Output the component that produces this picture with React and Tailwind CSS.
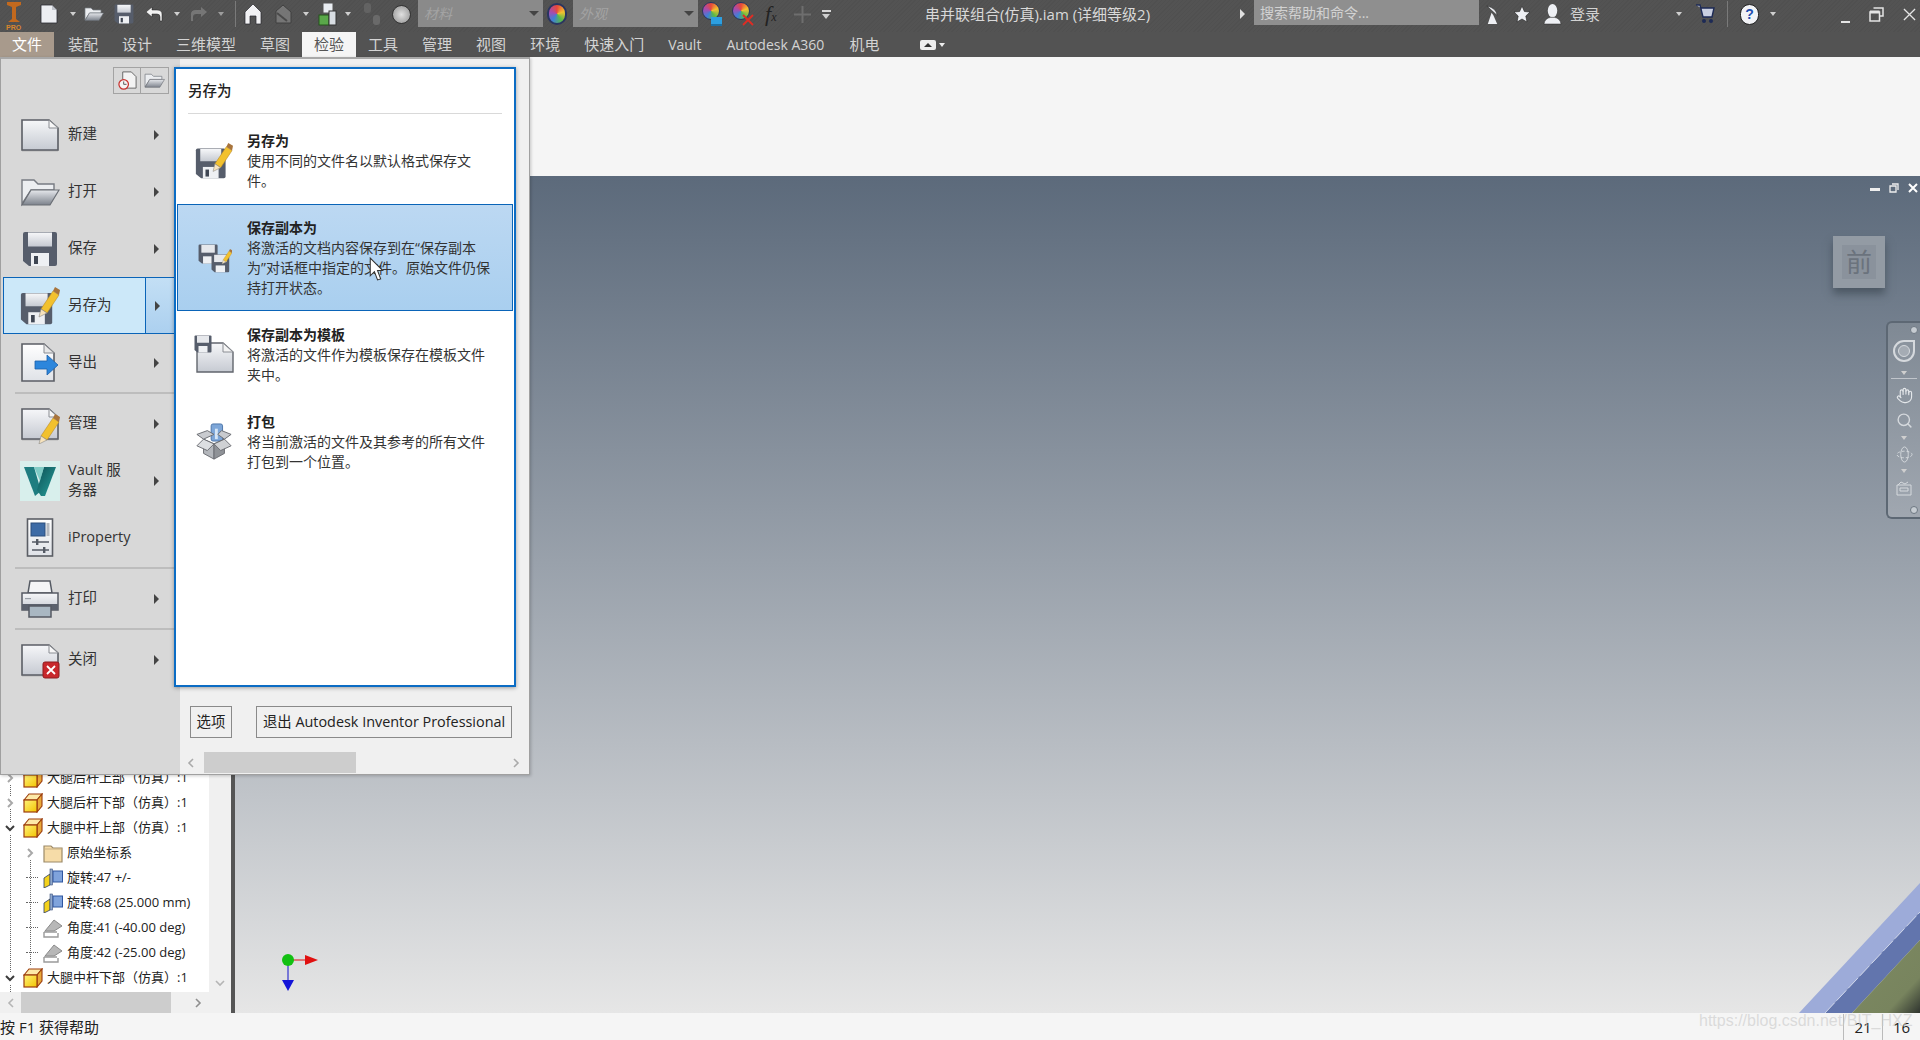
import React from "react";
import { Hand, Search } from "lucide-react";

const Defs = () => (
  <svg className="absolute w-0 h-0">
    <defs>
      <linearGradient id="paper" x1="0" y1="0" x2="0" y2="1">
        <stop offset="0" stopColor="#f6f7f9" />
        <stop offset="1" stopColor="#c6cad2" />
      </linearGradient>
      <linearGradient id="paper2" x1="0" y1="0" x2="0" y2="1">
        <stop offset="0" stopColor="#ffffff" />
        <stop offset="1" stopColor="#dfe2e7" />
      </linearGradient>
      <linearGradient id="folder" x1="0" y1="0" x2="0" y2="1">
        <stop offset="0" stopColor="#e6e8ec" />
        <stop offset="1" stopColor="#7c828c" />
      </linearGradient>
      <linearGradient id="cubeYellow" x1="0" y1="0" x2="1" y2="1">
        <stop offset="0" stopColor="#fff27a" />
        <stop offset="1" stopColor="#f2c400" />
      </linearGradient>
      <linearGradient id="teal" x1="0" y1="0" x2="1" y2="1">
        <stop offset="0" stopColor="#0d4f55" />
        <stop offset="1" stopColor="#27a39d" />
      </linearGradient>
      <linearGradient id="partGreen" x1="0" y1="0" x2="1" y2="1">
        <stop offset="0" stopColor="#7d8a62" />
        <stop offset="0.75" stopColor="#78845e" />
        <stop offset="1" stopColor="#2f342f" />
      </linearGradient>
    </defs>
  </svg>
);

const Pencil = () => (
  <g>
    <polygon points="20,24 32,6 38,10 26,28" fill="#f2c12e" stroke="#b8892a" strokeWidth="0.6" />
    <polygon points="20,24 26,28 18,32" fill="#f7e3bd" stroke="#888" strokeWidth="0.6" />
    <polygon points="32,6 34,2 39,5 38,10" fill="#a8743c" />
  </g>
);

const Doc = ({ children, className }) => (
  <svg viewBox="0 0 40 40" className={className}>
    <path d="M2 6 H29 L38 14 V35 H2 Z" fill="#9a9a9a" opacity="0.5" transform="translate(0 1.5)" />
    <path d="M2 5 H29 L38 13 V35 H2 Z" fill="url(#paper)" stroke="#5b5e65" strokeWidth="1.6" />
    <path d="M29 5 V13 H38 Z" fill="#f7f7f7" stroke="#8a8d93" strokeWidth="1" />
    {children}
  </svg>
);

const TallDoc = ({ children, className }) => (
  <svg viewBox="0 0 40 40" className={className}>
    <path d="M2 1 H24 L34 10 V38 H2 Z" fill="url(#paper2)" stroke="#5b5e65" strokeWidth="1.6" />
    <path d="M24 1 V10 H34 Z" fill="#e8e8e8" stroke="#8a8d93" strokeWidth="1" />
    {children}
  </svg>
);

const FolderOpen = ({ className }) => (
  <svg viewBox="0 0 40 30" className={className}>
    <path d="M2 27 V3 H14 L18 7 H34 V13 H11 Z" fill="#eceef1" stroke="#777b82" strokeWidth="1.4" />
    <path d="M2 28 L11 13 H39 L30 28 Z" fill="url(#folder)" stroke="#6a6e75" strokeWidth="1.2" />
  </svg>
);

const Floppy = ({ className, children, vb = "0 0 36 36" }) => (
  <svg viewBox={vb} className={className}>
    <path d="M1 3 Q1 1 3 1 H33 Q35 1 35 3 V33 Q35 35 33 35 H7 L1 30 Z" fill="#565d6b" />
    <rect x="6" y="1.5" width="24" height="14" fill="url(#paper)" />
    <rect x="9" y="22" width="18" height="13" fill="#eef0f3" />
    <rect x="12" y="25" width="4" height="8" fill="#3f4653" />
    {children}
  </svg>
);

const SaveAs = ({ className }) => (
  <svg viewBox="0 0 40 40" className={className}>
    <g transform="translate(0 6) scale(0.92)">
      <path d="M1 3 Q1 1 3 1 H33 Q35 1 35 3 V33 Q35 35 33 35 H7 L1 30 Z" fill="#565d6b" />
      <rect x="6" y="1.5" width="24" height="14" fill="url(#paper)" />
      <rect x="9" y="22" width="18" height="13" fill="#eef0f3" />
      <rect x="12" y="25" width="4" height="8" fill="#3f4653" />
    </g>
    <g transform="translate(1 -1)">
      <Pencil />
    </g>
  </svg>
);

const SaveCopy = ({ className }) => (
  <svg viewBox="0 0 36 36" className={className}>
    <g transform="translate(2 4) scale(0.56)">
      <path d="M1 3 Q1 1 3 1 H33 Q35 1 35 3 V33 Q35 35 33 35 H7 L1 30 Z" fill="#565d6b" />
      <rect x="6" y="1.5" width="24" height="14" fill="#e6e8ec" />
      <rect x="9" y="22" width="18" height="13" fill="#eef0f3" />
    </g>
    <g transform="translate(15 14) scale(0.52)">
      <path d="M1 3 Q1 1 3 1 H33 Q35 1 35 3 V33 Q35 35 33 35 H7 L1 30 Z" fill="#565d6b" />
      <rect x="6" y="1.5" width="24" height="14" fill="#e6e8ec" />
      <rect x="9" y="22" width="18" height="13" fill="#eef0f3" />
    </g>
    <g transform="translate(17 8) scale(0.5)">
      <Pencil />
    </g>
  </svg>
);

const SaveTemplate = ({ className }) => (
  <svg viewBox="0 0 40 40" className={className}>
    <path d="M3 8 H29 L39 17 V37 H3 Z" fill="url(#paper)" stroke="#62666d" strokeWidth="1.4" />
    <path d="M29 8 V17 H39 Z" fill="#f3f3f3" stroke="#8a8d93" strokeWidth="1" />
    <g transform="scale(0.5)">
      <path d="M1 3 Q1 1 3 1 H33 Q35 1 35 3 V33 Q35 35 33 35 H7 L1 30 Z" fill="#565d6b" />
      <rect x="6" y="1.5" width="24" height="14" fill="#e6e8ec" />
      <rect x="9" y="22" width="18" height="13" fill="#eef0f3" />
    </g>
  </svg>
);

const PackIcon = ({ className }) => (
  <svg viewBox="0 0 40 40" className={className}>
    <rect x="17" y="1" width="12" height="18" rx="2" fill="#7da6d8" stroke="#4b74a8" />
    <rect x="21" y="6" width="3" height="11" fill="#d6e5f5" />
    <path d="M9 17 L20 22 L20 38 L9 32 Z" fill="#b4b7bc" stroke="#6a6d72" />
    <path d="M31 17 L20 22 L20 38 L31 32 Z" fill="#8f9297" stroke="#6a6d72" />
    <path d="M9 17 L2 12 L13 8 L20 12 Z" fill="#c9cbcf" stroke="#6a6d72" />
    <path d="M31 17 L38 12 L28 8 L24 12 Z" fill="#c9cbcf" stroke="#6a6d72" />
    <path d="M9 17 L2 24 L13 29 L20 22 Z" fill="#dcdee1" stroke="#6a6d72" />
    <path d="M31 17 L38 24 L27 29 L20 22 Z" fill="#cfd1d4" stroke="#6a6d72" />
  </svg>
);

const VaultIcon = ({ className }) => (
  <svg viewBox="0 0 40 40" className={className}>
    <rect width="40" height="40" fill="#d8efec" />
    <polygon points="4,6 14,6 21,30 15,35" fill="#1e7d80" />
    <polygon points="36,6 24,6 17,29 21,35 25,35" fill="url(#teal)" />
    <polygon points="14,6 24,6 20,20" fill="#5bbdb6" opacity="0.7" />
  </svg>
);

const PropIcon = ({ className }) => (
  <svg viewBox="0 0 28 40" className={className}>
    <rect x="1.5" y="1" width="25" height="37" fill="url(#paper2)" stroke="#5b5e65" strokeWidth="1.6" />
    <rect x="5" y="5" width="14" height="13" fill="#3d6ba6" stroke="#2d4f7c" />
    <rect x="20.5" y="5" width="3" height="13" fill="#b5b9c0" />
    <path d="M6 24 H23 M6 32 H23" stroke="#555b65" strokeWidth="1.4" />
    <rect x="10" y="21" width="2.4" height="6" fill="#555b65" />
    <rect x="17" y="29" width="2.4" height="6" fill="#555b65" />
  </svg>
);

const PrinterIcon = ({ className }) => (
  <svg viewBox="0 0 40 40" className={className}>
    <path d="M10 2 H30 L32 14 H8 Z" fill="#f4f5f7" stroke="#555a63" strokeWidth="1.5" />
    <path d="M2 14 H38 V31 H2 Z" fill="url(#paper)" stroke="#555a63" strokeWidth="1.5" />
    <rect x="2" y="25" width="36" height="6" fill="#5b616d" />
    <rect x="5" y="19" width="6" height="1.2" fill="#9aa0a8" />
    <path d="M9 27 H31 V38 H9 Z" fill="#a9b7c2" stroke="#555a63" strokeWidth="1.5" />
  </svg>
);

const menuItems = [
  { label: "新建", icon: <Doc className="w-[40px] h-[40px]" />, arrow: true },
  { label: "打开", icon: <FolderOpen className="w-[40px] h-[30px]" />, arrow: true },
  { label: "保存", icon: <Floppy className="w-[36px] h-[36px]" />, arrow: true },
  { label: "另存为", icon: <SaveAs className="w-[40px] h-[40px]" />, arrow: true, active: true },
  {
    label: "导出",
    icon: (
      <TallDoc className="w-[40px] h-[40px]">
        <path d="M15 18 H27 V12 L38 22 L27 32 V26 H15 Z" fill="#2c86dc" stroke="#1c5fa8" strokeWidth="0.8" />
      </TallDoc>
    ),
    arrow: true,
    sep: true,
  },
  {
    label: "管理",
    icon: (
      <Doc className="w-[40px] h-[40px]">
        <g transform="translate(1 8)">
          <Pencil />
        </g>
      </Doc>
    ),
    arrow: true,
  },
  { label: "Vault 服务器", icon: <VaultIcon className="w-[40px] h-[40px]" />, arrow: true },
  { label: "iProperty", icon: <PropIcon className="w-[28px] h-[40px]" />, sep: true },
  { label: "打印", icon: <PrinterIcon className="w-[40px] h-[40px]" />, arrow: true, sep: true },
  {
    label: "关闭",
    icon: (
      <Doc className="w-[40px] h-[40px]">
        <rect x="23" y="22" width="16" height="16" rx="2" fill="#c8282c" stroke="#8e1c1f" />
        <path d="M27 26 L35 34 M35 26 L27 34" stroke="#fff" strokeWidth="1.8" />
      </Doc>
    ),
    arrow: true,
  },
];

const saveOptions = [
  {
    title: "另存为",
    lines: ["使用不同的文件名以默认格式保存文", "件。"],
    icon: <SaveAs className="w-[38px] h-[38px]" />,
  },
  {
    title: "保存副本为",
    lines: ["将激活的文档内容保存到在“保存副本", "为”对话框中指定的文件。原始文件仍保", "持打开状态。"],
    icon: <SaveCopy className="w-[36px] h-[36px]" />,
    active: true,
  },
  {
    title: "保存副本为模板",
    lines: ["将激活的文件作为模板保存在模板文件", "夹中。"],
    icon: <SaveTemplate className="w-[40px] h-[40px]" />,
  },
  {
    title: "打包",
    lines: ["将当前激活的文件及其参考的所有文件", "打包到一个位置。"],
    icon: <PackIcon className="w-[38px] h-[38px]" />,
  },
];

const tabs = ["装配", "设计", "三维模型", "草图", "检验", "工具", "管理", "视图", "环境", "快速入门"];

const tree = [
  { label: "大腿后杆上部（仿真）:1", level: 1, type: "part", state: "closed" },
  { label: "大腿后杆下部（仿真）:1", level: 1, type: "part", state: "closed" },
  { label: "大腿中杆上部（仿真）:1", level: 1, type: "part", state: "open" },
  { label: "原始坐标系", level: 2, type: "folder", state: "closed" },
  { label: "旋转:47 +/-", level: 2, type: "joint" },
  { label: "旋转:68 (25.000 mm)", level: 2, type: "joint" },
  { label: "角度:41 (-40.00 deg)", level: 2, type: "angle" },
  { label: "角度:42 (-25.00 deg)", level: 2, type: "angle" },
  { label: "大腿中杆下部（仿真）:1", level: 1, type: "part", state: "open" },
];

const Caret = ({ className = "" }) => (
  <span className={"w-0 h-0 border-x-[3px] border-x-transparent border-t-[4px] border-t-[#cfcfcf] shrink-0 " + className}></span>
);

const TreeIcon = ({ type }) => {
  if (type === "part")
    return (
      <svg viewBox="0 0 20 20" className="w-5 h-5 shrink-0">
        <path d="M1 7 L6 1 H19 L14 7 Z" fill="#fde9a8" stroke="#9c3d0c" strokeWidth="1.1" />
        <path d="M14 7 L19 1 V13 L14 19 Z" fill="#e8a93a" stroke="#9c3d0c" strokeWidth="1.1" />
        <rect x="1" y="7" width="13" height="12" fill="url(#cubeYellow)" stroke="#9c3d0c" strokeWidth="1.2" />
      </svg>
    );
  if (type === "folder")
    return (
      <svg viewBox="0 0 20 20" className="w-5 h-5 shrink-0">
        <path d="M1 3 H8 L10 5 H19 V19 H1 Z" fill="#f6dca8" stroke="#9c8a68" strokeWidth="1.2" />
        <path d="M1 6 H19" stroke="#c9b186" />
      </svg>
    );
  if (type === "joint")
    return (
      <svg viewBox="0 0 20 20" className="w-5 h-5 shrink-0">
        <polygon points="1,10 7,6 7,17 1,20" fill="#f4d21c" stroke="#2a3a66" strokeWidth="0.8" />
        <rect x="7" y="1" width="2.5" height="16" fill="#8fa8cc" stroke="#3b4f7a" strokeWidth="0.6" />
        <rect x="10" y="3" width="9.5" height="11" fill="#7fa3dc" stroke="#2f56a0" strokeWidth="1" />
      </svg>
    );
  return (
    <svg viewBox="0 0 20 20" className="w-5 h-5 shrink-0">
      <path d="M2 13 L11 2 L19 8 L11 13 Z" fill="#b7b7b7" stroke="#8a8a8a" />
      <path d="M1 14 H14 M1 14 L1 19 H15 V15" fill="none" stroke="#9a9a9a" strokeWidth="1.4" />
    </svg>
  );
};

const Chevron = ({ state }) => (
  <svg viewBox="0 0 12 12" className="w-3 h-3 bg-white relative">
    {state === "open" ? (
      <path d="M2 4 L6 8 L10 4" fill="none" stroke="#3c3c3c" strokeWidth="2" />
    ) : (
      <path d="M4 2 L8 6 L4 10" fill="none" stroke="#a8a8a8" strokeWidth="2" />
    )}
  </svg>
);

const TreeRow = ({ item }) => (
  <div className={"relative flex items-center h-[25px] shrink-0 " + (item.level === 1 ? "pl-[4px]" : "pl-[24px]")}>
    {item.state ? (
      <Chevron state={item.state} />
    ) : (
      <span className="w-3 h-0 border-t border-dotted border-[#666] ml-[2px] -mr-[2px]"></span>
    )}
    <span className="ml-[3px]"></span>
    <span className="w-[4px]"></span>
    <TreeIcon type={item.type} />
    <span className="ml-[4px] text-[13px] text-[#222] whitespace-nowrap">{item.label}</span>
  </div>
);

const Cursor = () => (
  <svg viewBox="0 0 14 24" className="absolute left-[368px] top-[198px] w-[15px] h-[25px] z-30">
    <path d="M1 1 V18 L5 14 L8 22 L11 21 L8 13 H13 Z" fill="#fff" stroke="#333" strokeWidth="1" />
  </svg>
);

const LeftMenu = () => (
  <div className="w-[179px] shrink-0 bg-[#d8d8d8] flex flex-col">
    <div className="h-[47px] flex justify-end items-start pt-[8px] pr-[11px]">
      <div className="flex border border-[#a3a3a3] h-[27px]">
        <div className="w-[27px] flex items-center justify-center border-r border-[#a3a3a3]">
          <svg viewBox="0 0 22 22" className="w-[21px] h-[21px]">
            <path d="M6 2 H15 L20 7 V19 H6 Z" fill="#f3f3f3" stroke="#666" />
            <circle cx="7" cy="15" r="5" fill="#f5f5f5" stroke="#c8322e" strokeWidth="1.3" />
            <path d="M7 12 V15 H10" fill="none" stroke="#555" />
          </svg>
        </div>
        <div className="w-[27px] flex items-center justify-center">
          <FolderOpen className="w-[21px] h-[17px]" />
        </div>
      </div>
    </div>
    {menuItems.map((m) => (
      <div key={m.label}>
        <div
          className={
            "relative flex items-center h-[57px] ml-[2px] mr-[4px] border " +
            (m.active ? "border-[#0a64b8] bg-[#cce8f9]" : "border-transparent")
          }
        >
          <div className="w-[56px] shrink-0 flex justify-center pl-[16px]">
            <div className="w-[40px] flex justify-center">{m.icon}</div>
          </div>
          <div className="w-[64px] ml-[8px] pb-[2px] text-[14.5px] leading-5 text-[#333]">{m.label}</div>
          {m.arrow && (
            <div
              className={
                "absolute right-0 inset-y-0 w-[30px] flex items-center pl-[9px] " +
                (m.active ? "bg-gradient-to-b from-[#c3dff5] to-[#acd0ef] border-l border-[#0a64b8]" : "")
              }
            >
              <span className="w-0 h-0 border-y-[5px] border-y-transparent border-l-[5px] border-l-[#444]"></span>
            </div>
          )}
        </div>
        {m.sep && <div className="h-[2px] my-[1px] ml-[14px] mr-[4px] bg-[#bdbdbd]"></div>}
      </div>
    ))}
  </div>
);

const SavePanel = () => (
  <div className="w-[342px] h-[620px] mt-[8px] -ml-[6px] bg-white border-2 border-[#0b6cc4] shadow-[0_1px_4px_rgba(0,0,0,0.35)] relative z-10 px-[1px]">
    <div className="h-[45px] mx-[11px] border-b border-[#d9d9d9] flex items-center text-[14.5px] font-medium text-[#222]">另存为</div>
    <div className="h-[3px]"></div>
    {saveOptions.map((o) => (
      <div
        key={o.title}
        className={
          "flex pt-[13px] pb-[12px] border " +
          (o.active ? "bg-gradient-to-b from-[#bcd8f2] to-[#a9cfef] border-[#0a64b8]" : "border-transparent")
        }
      >
        <div className="w-[69px] shrink-0 flex items-center justify-center pl-[2px]">{o.icon}</div>
        <div className="text-[14px] leading-5 text-[#333] whitespace-nowrap">
          <div className="font-bold text-[#222]">{o.title}</div>
          {o.lines.map((l) => (
            <div key={l}>{l}</div>
          ))}
        </div>
      </div>
    ))}
  </div>
);

const MenuOverlay = () => (
  <div className="absolute left-0 top-[57px] w-[530px] h-[718px] z-20 bg-[#f0f0f0] border-l border-r border-b border-[#a0a0a0] border-t-2 border-t-[#a8a8a8] shadow-[1px_1px_3px_rgba(0,0,0,0.2)] flex">
    <LeftMenu />
    <div className="flex flex-col flex-1">
      <SavePanel />
      <div className="flex mt-[19px] ml-[10px] text-[14.4px] text-[#222]">
        <div className="w-[42px] h-[32px] border border-[#8a8a8a] flex items-center justify-center">选项</div>
        <div className="w-[256px] h-[32px] ml-[24px] border border-[#8a8a8a] flex items-center justify-center whitespace-nowrap">
          退出 Autodesk Inventor Professional
        </div>
      </div>
      <div className="mt-[14px] h-[21px] flex items-center">
        <svg viewBox="0 0 12 12" className="w-3 h-3 ml-[5px] text-[#aaa]">
          <path d="M8 2 L4 6 L8 10" fill="none" stroke="currentColor" strokeWidth="1.6" />
        </svg>
        <div className="w-[152px] h-full bg-[#cdcdcd] ml-[7px]"></div>
        <div className="flex-1"></div>
        <svg viewBox="0 0 12 12" className="w-3 h-3 mr-[7px] text-[#aaa]">
          <path d="M4 2 L8 6 L4 10" fill="none" stroke="currentColor" strokeWidth="1.6" />
        </svg>
      </div>
    </div>
    <Cursor />
  </div>
);

const TopIcons = () => (
  <div className="h-8 pb-1 flex items-center text-[#dcdcdc] bg-[repeating-linear-gradient(135deg,#535353_0px,#535353_2px,#505050_2px,#505050_3px)]">
    <svg viewBox="0 0 16 30" className="w-[16px] h-[30px] ml-[6px] self-start mt-px">
      <path d="M1 1 H15 V4 L10 6 V18 L14 21 H2 L6 18 V6 L1 4 Z" fill="#c2691e" />
      <text x="0" y="29" fontSize="7" fill="#d8862e" fontFamily="Liberation Sans" fontWeight="700">PRO</text>
    </svg>
    <svg viewBox="0 0 18 20" className="w-[18px] h-[20px] ml-[18px]">
      <path d="M1 1 H12 L17 6 V19 H1 Z" fill="#eceef2" stroke="#2b2b33" strokeWidth="0.8" />
      <path d="M12 1 V6 H17" fill="#bfc3ca" />
    </svg>
    <Caret className="ml-[12px]" />
    <FolderOpen className="w-[20px] h-[16px] ml-[8px]" />
    <Floppy className="w-[20px] h-[20px] ml-[10px]" />
    <svg viewBox="0 0 18 16" className="w-[18px] h-[16px] ml-[11px]">
      <path d="M7 1 L1 6 L7 11 V8 H12 Q15 8 15 11 V15 H17 V8 Q17 4 12 4 H7 Z" fill="#f3f3f3" stroke="#222" strokeWidth="0.5" />
    </svg>
    <Caret className="ml-[11px]" />
    <svg viewBox="0 0 18 16" className="w-[18px] h-[16px] ml-[10px] opacity-50">
      <path d="M11 1 L17 6 L11 11 V8 H6 Q3 8 3 11 V15 H1 V8 Q1 4 6 4 H11 Z" fill="#9a9a9a" />
    </svg>
    <Caret className="ml-[10px] opacity-60" />
    <span className="w-px h-[26px] bg-[#7a7a7a] ml-[11px]"></span>
    <svg viewBox="0 0 18 22" className="w-[18px] h-[22px] ml-[8px]">
      <path d="M9 1 L17 9 V21 H12 V13 H6 V21 H1 V9 Z" fill="#f2f2f4" stroke="#26262c" strokeWidth="0.7" />
    </svg>
    <svg viewBox="0 0 20 22" className="w-[20px] h-[22px] ml-[11px] opacity-50">
      <path d="M3 20 V8 L10 2 L18 9 V20 Z" fill="#9a9a9a" stroke="#2f2f2f" />
      <path d="M4 10 L14 18" stroke="#444" strokeWidth="2" />
    </svg>
    <Caret className="ml-[10px]" />
    <svg viewBox="0 0 20 24" className="w-[20px] h-[24px] ml-[9px]">
      <rect x="5" y="1" width="10" height="10" fill="#e9edf2" stroke="#555" />
      <rect x="1" y="13" width="10" height="10" fill="#5aa84a" stroke="#24521c" />
      <rect x="11" y="9" width="7" height="14" fill="#d8dde2" stroke="#333" />
    </svg>
    <Caret className="ml-[7px]" />
    <svg viewBox="0 0 20 24" className="w-[20px] h-[24px] ml-[11px] opacity-60">
      <rect x="2" y="1" width="7" height="10" rx="3" fill="#6e6e6e" />
      <rect x="11" y="13" width="7" height="10" rx="3" fill="#7a7a7a" />
    </svg>
    <span className="w-[19px] h-[19px] ml-[10px] rounded-full border border-[#333] bg-[radial-gradient(circle,#e0e0e0,#8f8f8f)] shrink-0"></span>
    <div className="w-[125px] h-[27px] ml-[7px] self-start bg-[#8a8a8a] flex items-center justify-between pl-[6px] pr-[4px] italic text-[14px] text-[#a3a3a3]">
      材料
      <span className="w-0 h-0 border-x-[5px] border-x-transparent border-t-[5px] border-t-[#444]"></span>
    </div>
    <span className="w-[20px] h-[22px] ml-[4px] rounded-full border-2 border-[#2a3560] bg-[conic-gradient(#e8473a,#f3c22f,#5aba47,#3f7fd8,#a64cb0,#e8473a)] shrink-0"></span>
    <div className="w-[125px] h-[27px] ml-[6px] self-start bg-[#8a8a8a] flex items-center justify-between pl-[6px] pr-[4px] italic text-[14px] text-[#a3a3a3]">
      外观
      <span className="w-0 h-0 border-x-[5px] border-x-transparent border-t-[5px] border-t-[#444]"></span>
    </div>
    <div className="relative w-[20px] h-[24px] ml-[4px]">
      <span className="block w-[18px] h-[18px] rounded-full border border-[#2a3560] bg-[conic-gradient(#e8473a,#f3c22f,#5aba47,#3f7fd8,#a64cb0,#e8473a)]"></span>
      <span className="absolute right-0 bottom-0 w-[11px] h-[9px] bg-[#2d9fe0] border-b-2 border-[#1d6ea0]"></span>
    </div>
    <div className="relative w-[20px] h-[24px] ml-[10px]">
      <span className="block w-[18px] h-[18px] rounded-full border border-[#2a3560] bg-[conic-gradient(#e8473a,#f3c22f,#5aba47,#3f7fd8,#a64cb0,#e8473a)]"></span>
      <svg viewBox="0 0 12 12" className="absolute right-[-2px] bottom-0 w-[12px] h-[12px]">
        <path d="M1 1 L11 11 M11 1 L1 11" stroke="#e02c24" strokeWidth="1.8" />
      </svg>
    </div>
    <span className="w-[17px] ml-[13px] italic text-[#222] text-[22px] leading-none font-['Liberation_Serif',serif] whitespace-nowrap">
      f<span className="text-[12px]">x</span>
    </span>
    <svg viewBox="0 0 19 19" className="w-[19px] h-[19px] ml-[11px]">
      <path d="M9.5 1 V18 M1 9.5 H18" stroke="#6e6e6e" strokeWidth="2" />
    </svg>
    <div className="w-[10px] ml-[9px] flex flex-col items-center gap-[2px]">
      <span className="w-[9px] h-[2px] bg-[#d8d8d8]"></span>
      <Caret className="border-x-[4px] border-t-[5px]" />
    </div>
    <div className="ml-[94px] w-[226px] text-[15px] leading-5 text-[#d9d9d9] whitespace-nowrap">串并联组合(仿真).iam (详细等级2)</div>
    <span className="ml-[89px] w-0 h-0 border-y-[5px] border-y-transparent border-l-[5px] border-l-[#e0e0e0]"></span>
    <div className="w-[225px] h-[25px] ml-[9px] self-start bg-[#8f8f8f] flex items-center pl-[6px] text-[14px] text-[#d2d2d2]">搜索帮助和命令...</div>
    <svg viewBox="0 0 16 22" className="w-[15px] h-[21px] ml-[6px]">
      <path d="M2 2 Q12 4 13 12 Z" fill="#eef0f4" stroke="#222" strokeWidth="0.6" />
      <path d="M3 21 L7 9 L9 12 L13 21 Z" fill="#eef0f4" />
    </svg>
    <svg viewBox="0 0 18 18" className="w-[18px] h-[18px] ml-[13px]">
      <polygon points="9,1 11.4,6.5 17,7 12.8,11 14,17 9,14 4,17 5.2,11 1,7 6.6,6.5" fill="#eef0f4" stroke="#222" strokeWidth="0.6" />
    </svg>
    <svg viewBox="0 0 20 24" className="w-[19px] h-[23px] ml-[12px]">
      <ellipse cx="10" cy="8" rx="5" ry="7" fill="#eef0f4" />
      <path d="M1 22 Q2 16 8 15 H12 Q18 16 19 22 Z" fill="#eef0f4" stroke="#222" strokeWidth="0.5" />
    </svg>
    <span className="ml-[8px] text-[15px] text-[#d2d2d2]">登录</span>
    <Caret className="ml-[76px]" />
    <svg viewBox="0 0 20 22" className="w-[20px] h-[22px] ml-[13px]">
      <path d="M1 2 H5 L8 14 H17 L19 5 H6" fill="#c9cfe0" stroke="#1d2a55" strokeWidth="1.4" />
      <circle cx="9" cy="18" r="2" fill="#1d2a55" />
      <circle cx="16" cy="18" r="2" fill="#1d2a55" />
    </svg>
    <span className="w-px h-[26px] bg-[#7a7a7a] ml-[12px]"></span>
    <span className="w-[19px] h-[21px] ml-[12px] rounded-full bg-[#f2f3f6] border border-[#222] flex items-center justify-center text-[14px] leading-none font-bold text-[#1f4fb0] font-['Liberation_Sans',sans-serif]">?</span>
    <Caret className="ml-[11px]" />
    <span className="w-[9px] h-[2px] bg-[#e4e4e4] ml-[65px] self-end mb-[5px]"></span>
    <svg viewBox="0 0 15 15" className="w-[15px] h-[15px] ml-[19px]">
      <path d="M4.5 1 H14 V9 H11 M1 5 H10.5 V14 H1 Z" fill="none" stroke="#e4e4e4" strokeWidth="1.5" />
      <path d="M1 5 H10.5" stroke="#e4e4e4" strokeWidth="3" />
    </svg>
    <svg viewBox="0 0 14 14" className="w-[13px] h-[13px] ml-[19px]">
      <path d="M1 1 L13 13 M13 1 L1 13" stroke="#e4e4e4" strokeWidth="1.4" />
    </svg>
  </div>
);

const TabBar = () => (
  <div className="h-[25px] flex items-center text-[15px] text-[#d4d4d4]">
    <div className="w-[54px] h-full bg-[#a89a8c] text-white flex items-center justify-center mr-[2px]">文件</div>
    {tabs.map((t) => (
      <div
        key={t}
        className={"h-full flex items-center px-3 whitespace-nowrap " + (t === "检验" ? "bg-[#f5f5f5] text-[#555]" : "")}
      >
        {t}
      </div>
    ))}
    <div className="h-full flex items-center px-3 text-[14px]">Vault</div>
    <div className="h-full w-[124px] flex items-center justify-center text-[14px] whitespace-nowrap">Autodesk A360</div>
    <div className="h-full flex items-center px-3">机电</div>
    <div className="flex items-center ml-[29px] gap-[3px]">
      <span className="w-[16px] h-[10px] bg-[#eee] rounded-[2px] flex items-center justify-center">
        <span className="w-0 h-0 border-x-[4px] border-x-transparent border-b-[4px] border-b-[#333]"></span>
      </span>
      <Caret className="border-t-[#eee]" />
    </div>
  </div>
);

const TreePanel = () => (
  <div className="w-[235px] shrink-0 flex bg-white border-r-4 border-[#555] min-h-0">
    <div className="w-full flex flex-col min-w-0">
      <div className="flex-1 flex min-h-0">
        <div className="relative w-[209px] flex flex-col justify-end overflow-hidden pb-[2px]">
          <span className="absolute left-[10px] top-0 bottom-0 border-l border-dotted border-[#666]"></span>
          <span className="absolute left-[30px] bottom-[27px] h-[110px] border-l border-dotted border-[#666]"></span>
          {tree.map((t) => (
            <TreeRow key={t.label} item={t} />
          ))}
        </div>
        <div className="flex-1 bg-[#f0f0f0] flex flex-col justify-end items-center pb-[3px]">
          <svg viewBox="0 0 12 12" className="w-3 h-3">
            <path d="M2 4 L6 8 L10 4" fill="none" stroke="#b5b5b5" strokeWidth="1.6" />
          </svg>
        </div>
      </div>
      <div className="h-[21px] bg-[#f0f0f0] flex items-center">
        <svg viewBox="0 0 12 12" className="w-3 h-3 ml-[5px]">
          <path d="M8 2 L4 6 L8 10" fill="none" stroke="#b5b5b5" strokeWidth="1.6" />
        </svg>
        <div className="w-[150px] h-full bg-[#cdcdcd] ml-[4px]"></div>
        <svg viewBox="0 0 12 12" className="w-3 h-3 ml-[21px]">
          <path d="M4 2 L8 6 L4 10" fill="none" stroke="#8f8f8f" strokeWidth="1.6" />
        </svg>
      </div>
    </div>
  </div>
);

const NavBar = () => (
  <div className="absolute right-0 top-[145px] w-[34px] h-[198px] bg-gradient-to-b from-[#7f8994] to-[#a0a7b0] border-2 border-r-0 border-[#5d6874] rounded-l-[6px] flex flex-col items-center text-[#e4e7ea]">
    <span className="self-end mr-[2px] mt-[3px] w-[8px] h-[8px] rounded-full bg-[#c6ccd2] border border-[#6d7782]"></span>
    <span className="mt-[6px] w-[22px] h-[22px] rounded-full rounded-tr-[5px] border-2 border-[#d5d9dd] bg-[#8b949e] flex items-center justify-center">
      <span className="w-[12px] h-[12px] rounded-full border border-[#d5d9dd] bg-[#a5acb4]"></span>
    </span>
    <Caret className="mt-[9px] border-t-[#5b6570]" />
    <span className="w-[26px] h-px bg-[#c0c5cb] mt-[3px]"></span>
    <Hand size={17} strokeWidth={1.6} className="mt-[8px]" />
    <Search size={17} strokeWidth={2} className="mt-[8px] text-[#d5d9dd]" />
    <Caret className="mt-[7px] border-t-[#5b6570]" />
    <svg viewBox="0 0 18 18" className="w-[17px] h-[17px] mt-[6px]">
      <ellipse cx="9" cy="9" rx="4" ry="8" fill="none" stroke="#d5d9dd" />
      <ellipse cx="9" cy="9" rx="8" ry="3.5" fill="none" stroke="#d5d9dd" strokeDasharray="3 2" />
    </svg>
    <Caret className="mt-[6px] border-t-[#5b6570]" />
    <svg viewBox="0 0 16 16" className="w-[16px] h-[16px] mt-[7px]">
      <path d="M1 5 H15 V15 H1 Z M4 8 H12 V11 H4 Z M2 5 L5 2 L9 4 L12 2" fill="none" stroke="#d5d9dd" />
    </svg>
    <span className="mt-auto mb-[3px] self-end mr-[2px] w-[8px] h-[8px] rounded-full bg-[#c6ccd2] border border-[#6d7782]"></span>
  </div>
);

const Viewport = () => (
  <div className="relative flex-1 overflow-hidden bg-gradient-to-b from-[#5c6a7b] to-[#e6e6e6]">
    <div className="absolute right-0 top-[6px] w-[50px] h-[12px] flex items-center justify-between pr-[2px]">
      <span className="w-[10px] h-[3px] bg-[#eee] mt-[3px]"></span>
      <svg viewBox="0 0 10 10" className="w-[10px] h-[10px]">
        <path d="M3 1 H9 V7 M1 3 H7 V9 H1 Z" fill="none" stroke="#eee" strokeWidth="1.3" />
      </svg>
      <svg viewBox="0 0 10 10" className="w-[10px] h-[10px]">
        <path d="M1 1 L9 9 M9 1 L1 9" stroke="#fff" strokeWidth="2" />
      </svg>
    </div>

    {/* ViewCube */}
    <div className="absolute left-[1598px] top-[60px] w-[52px] h-[52px] bg-[#939ba4] shadow-[0_6px_8px_rgba(50,60,70,0.55)] flex items-center justify-center">
      <span className="w-[34px] h-[34px] bg-[#8a929c] flex items-center justify-center text-[26px] leading-none text-[#6b737d]">前</span>
    </div>

    <NavBar />

    {/* triad */}
    <svg viewBox="0 0 40 40" className="absolute left-[46px] top-[775px] w-[42px] h-[40px]">
      <path d="M6 9 H26" stroke="#d11" strokeWidth="1" />
      <polygon points="23,4 36,9 23,14" fill="#e01010" />
      <path d="M6 9 V30" stroke="#1111cc" strokeWidth="1" />
      <polygon points="0,29 12,29 6,40" fill="#1414d8" />
      <circle cx="6" cy="9" r="6" fill="#12c012" />
    </svg>

    {/* part */}
    <svg viewBox="0 0 121 130" className="absolute right-0 bottom-0 w-[121px] h-[130px]">
      <polygon points="0,130 121,0 121,29 26,130" fill="#9dabd9" />
      <polygon points="26,130 121,29 121,57 53,130" fill="#6275ad" />
      <polygon points="53,130 121,57 121,130" fill="url(#partGreen)" />
      <path d="M26 130 L121 29" stroke="#dfe4f2" strokeWidth="0.8" strokeDasharray="14 3" />
    </svg>
  </div>
);

const App = () => {
  return (
    <div className="relative h-screen w-full overflow-hidden flex flex-col bg-[#f5f5f5] font-['Open_Sans','Noto_Sans_CJK_SC',sans-serif]">
      <Defs />
      {/* Title bar + ribbon tabs */}
      <header className="bg-[#535353] shrink-0">
        <TopIcons />
        <TabBar />
      </header>

      {/* Empty ribbon strip */}
      <div className="h-[119px] shrink-0 bg-[#f5f5f5]"></div>

      {/* Browser + graphics window */}
      <main className="flex-1 flex min-h-0">
        <TreePanel />
        <Viewport />
      </main>

      {/* Status bar */}
      <footer className="h-[27px] shrink-0 bg-[#f5f5f5] flex items-center text-[15px] text-[#222] pt-px">
        <span className="flex-1">按 F1 获得帮助</span>
        <span className="w-[39px] h-full border-l border-[#bbb] flex items-center justify-center">21</span>
        <span className="w-[38px] h-full border-l border-[#bbb] flex items-center justify-center">16</span>
      </footer>

      <MenuOverlay />

      {/* Watermark */}
      <div className="absolute left-[1699px] top-[1011px] text-[16px] leading-5 text-[#c8c8c8]/60 font-['Liberation_Sans',sans-serif] whitespace-nowrap">
        https://blog.csdn.net/BIT_HXZ
      </div>
    </div>
  );
};

export default App;
